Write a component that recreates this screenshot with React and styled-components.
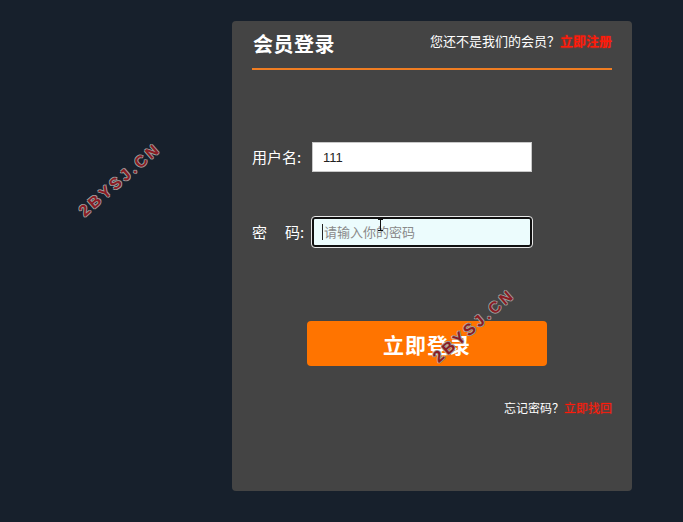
import React from "react";
import styled, { createGlobalStyle } from "styled-components";

const Global = createGlobalStyle`
  html, body { margin: 0; padding: 0; }
  body {
    background: #17202c;
    font-family: "Noto Sans CJK SC", "Liberation Sans", sans-serif;
    width: 683px;
    height: 522px;
    overflow: hidden;
  }
`;

const Page = styled.div`
  position: relative;
  width: 683px;
  height: 522px;
  padding: 21px 0 0 232px;
  box-sizing: border-box;
`;

const Card = styled.div`
  width: 400px;
  height: 470px;
  background: #444444;
  border-radius: 4px;
  padding: 0 20px;
  box-sizing: border-box;
  display: flex;
  flex-direction: column;
`;

const Header = styled.div`
  height: 47px;
  border-bottom: 2px solid #f07d22;
  display: flex;
  align-items: center;
  justify-content: space-between;
  box-sizing: content-box;
`;

const Title = styled.h2`
  margin: -2px 0 0 1px;
  font-size: 20px;
  font-weight: 700;
  color: #ffffff;
  letter-spacing: 0.5px;
`;

const Note = styled.div`
  font-size: 13px;
  color: #ffffff;
  margin-top: -8px;
`;

const RedLink = styled.a`
  color: #ff1a0a;
  font-weight: ${(p) => (p.$bold ? 700 : 400)};
  text-decoration: none;
  text-shadow: 0 0 2px rgba(255, 40, 20, 0.6);
`;

const Form = styled.div`
  display: flex;
  flex-direction: column;
  padding-top: 72px;
`;

const Row = styled.div`
  display: flex;
  align-items: center;
  height: 30px;
  margin-bottom: ${(p) => p.$mb || 0}px;
`;

const Label = styled.label`
  width: 60px;
  font-size: 15px;
  color: #ffffff;
  white-space: pre;
  margin-top: -2px;
`;

const Gap = styled.span`
  display: inline-block;
  width: 18px;
`;

const Field = styled.div`
  position: relative;
`;

const Input = styled.input`
  display: block;
  width: 220px;
  height: 30px;
  box-sizing: border-box;
  padding: 0 10px;
  font-family: "Liberation Sans", "Noto Sans CJK SC", sans-serif;
  font-size: 13px;
  color: #222;
  background: ${(p) => (p.$focused ? "#ecfcfd" : "#ffffff")};
  border: ${(p) => (p.$focused ? "2px solid #111" : "1px solid #c8c8c8")};
  border-radius: ${(p) => (p.$focused ? "3px" : "0")};
  outline: ${(p) => (p.$focused ? "1px solid #e8e8e8" : "none")};
  outline-offset: 0;
  &::placeholder { color: #8a8a8a; font-family: "Noto Sans CJK SC", sans-serif; }
`;

const Caret = styled.span`
  position: absolute;
  left: 10px;
  top: 7px;
  width: 1px;
  height: 16px;
  background: #222;
`;

const Button = styled.button`
  margin: 74px 0 0 55px;
  width: 240px;
  height: 45px;
  background: #ff7400;
  border: none;
  border-radius: 4px;
  color: #ffffff;
  font-family: "Noto Sans CJK SC", sans-serif;
  font-size: 21px;
  font-weight: 700;
  letter-spacing: 1px;
`;

const Forgot = styled.div`
  margin-top: 33px;
  align-self: flex-end;
  font-size: 12px;
  color: #ffffff;
`;

const Watermark = styled.div`
  position: absolute;
  left: ${(p) => p.$x}px;
  top: ${(p) => p.$y}px;
  transform: translate(-50%, -50%) rotate(-41deg);
  font-family: "Liberation Sans", sans-serif;
  font-weight: 700;
  font-size: 16px;
  letter-spacing: 3px;
  color: #8a1c24;
  white-space: nowrap;
  pointer-events: none;
  text-shadow:
    1px 0 0 #9e9e9e, -1px 0 0 #9e9e9e, 0 1px 0 #9e9e9e, 0 -1px 0 #9e9e9e;
`;

const Cursor = styled.div`
  position: absolute;
  left: 380px;
  top: 219px;
  width: 1px;
  height: 12px;
  background: #111;
  &::before, &::after {
    content: "";
    position: absolute;
    left: -2px;
    width: 5px;
    height: 1px;
    background: #111;
  }
  &::before { top: 0; }
  &::after { bottom: 0; }
`;

export default function App() {
  return (
    <>
      <Global />
      <Page>
        <Card>
          <Header>
            <Title>会员登录</Title>
            <Note>
              您还不是我们的会员？<RedLink $bold href="#">立即注册</RedLink>
            </Note>
          </Header>
          <Form>
            <Row $mb={45}>
              <Label>用户名:</Label>
              <Field>
                <Input defaultValue="111" />
              </Field>
            </Row>
            <Row>
              <Label>密<Gap />码:</Label>
              <Field>
                <Input $focused placeholder="请输入你的密码" />
                <Caret />
              </Field>
            </Row>
            <Button>立即登录</Button>
            <Forgot>
              忘记密码？<RedLink href="#">立即找回</RedLink>
            </Forgot>
          </Form>
        </Card>
        <Watermark $x={120} $y={180}>2BYSJ.CN</Watermark>
        <Watermark $x={474} $y={326}>2BYSJ.CN</Watermark>
        <Cursor />
      </Page>
    </>
  );
}
